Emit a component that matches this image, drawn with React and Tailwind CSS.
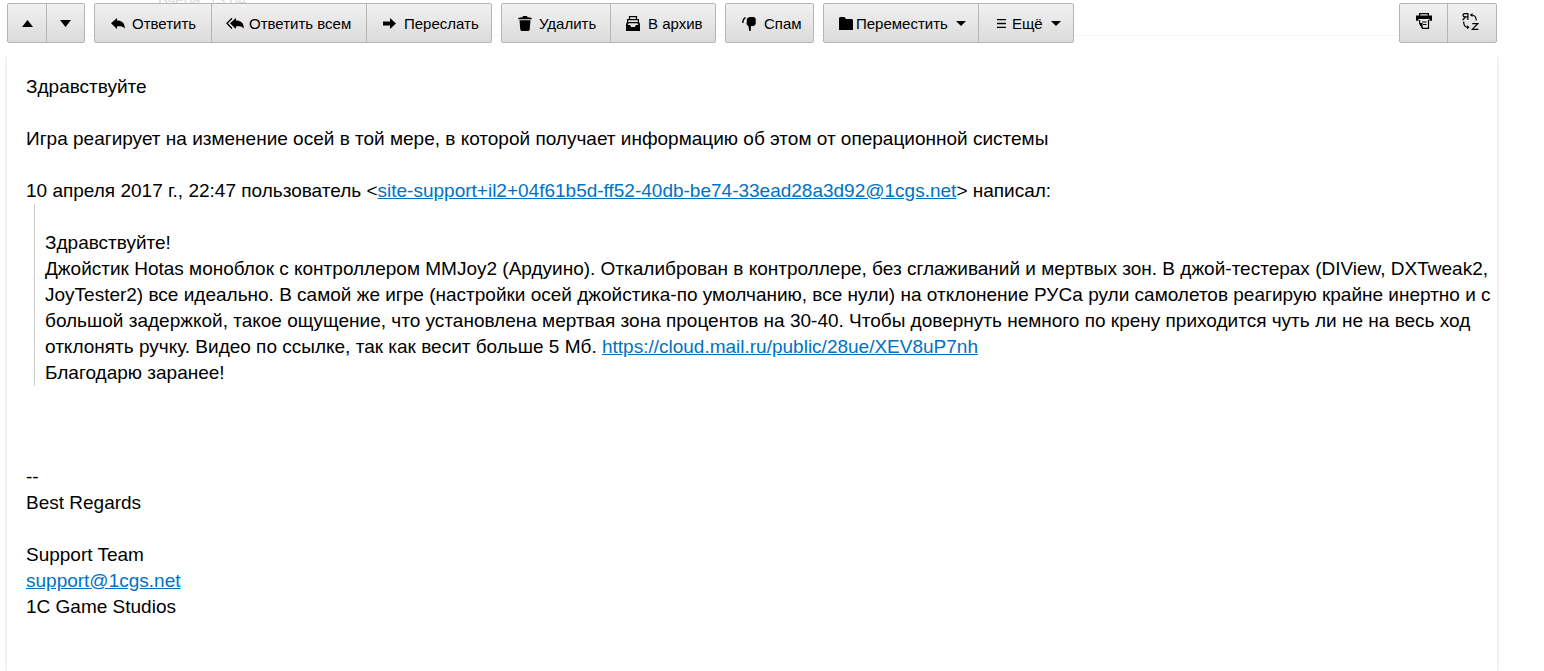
import React from 'react';

const FONT = "font-['Liberation_Sans',Arial,sans-serif]";

function Icon({ className, children, ...rest }) {
    return (
        <svg aria-hidden="true" fill="currentColor" className={`mb-0.5 shrink-0 ${className}`} {...rest}>
            {children}
        </svg>
    );
}

const replyPath = 'M6 0v2.500C10.500 2.500 13.600 4.500 14 10.500C12.500 8.500 10 8 6 8.200V11L0 5.300z';

function Group({ children, className = '' }) {
    return (
        <div className={`flex h-10 rounded-[2px] border border-[#b5b5b5] bg-linear-to-b from-[#f1f1f1] to-[#dbdbdb] divide-x divide-[#b5b5b5] ${className}`}>
            {children}
        </div>
    );
}

function Btn({ className = '', children, label }) {
    return (
        <button type="button" aria-label={label} className={`flex items-center whitespace-nowrap pt-0.5 ${className}`}>
            {children}
        </button>
    );
}

function Caret() {
    return (
        <Icon className="ml-2 h-[5px] w-[10px]" viewBox="0 0 10 5">
            <path d="M0 0h10L5 5z" />
        </Icon>
    );
}

function Toolbar() {
    return (
        <div className="relative flex pl-[7px] pr-[47px] pt-[3px] text-[15px] text-black">
            <div className="absolute top-[35px] left-[7px] right-[47px] h-px bg-[#f5f5f5]" />
            <div className="absolute -top-[7px] left-[158px] text-[15px] leading-[13px] text-[#dcdcdc]">Вчера, 13:04</div>
            <div className="relative flex flex-1 gap-[9px]">
                <Group>
                    <Btn label="Предыдущее письмо" className="w-[39px] justify-center">
                        <Icon className="h-[7px] w-[11px]" viewBox="0 0 11 7"><path d="M5.500 0L11 7H0z" /></Icon>
                    </Btn>
                    <Btn label="Следующее письмо" className="w-[37px] justify-center">
                        <Icon className="h-[7px] w-[11px]" viewBox="0 0 11 7"><path d="M5.500 7L0 0h11z" /></Icon>
                    </Btn>
                </Group>

                <Group>
                    <Btn className="w-[117px] pl-4">
                        <Icon className="mr-[7px] h-[11px] w-[14px]" viewBox="0 0 14 11"><path d={replyPath} /></Icon>
                        Ответить
                    </Btn>
                    <Btn className="w-[155px] pl-[14px]">
                        <Icon className="mr-[5px] h-[11px] w-[18px]" viewBox="0 0 18 11">
                            <path transform="translate(4 0)" d={replyPath} />
                            <path d="M6 .3L1 5.300L6 10.500" fill="none" stroke="currentColor" strokeWidth="1.300" />
                        </Icon>
                        Ответить всем
                    </Btn>
                    <Btn className="w-[124px] pl-4">
                        <Icon className="mr-2 h-[11px] w-[13px]" viewBox="0 0 13 11"><path d="M0 3.500h7V0l6 5.500L7 11V7.500H0z" /></Icon>
                        Переслать
                    </Btn>
                </Group>

                <Group>
                    <Btn className="w-[109px] pl-4">
                        <Icon className="mr-[7px] h-[15px] w-[14px]" viewBox="0 0 14 15">
                            <path d="M.3 3.300V2Q2 1.300 4.500 1.200L5 0h4l.5 1.200Q12 1.300 13.700 2v1.300zM1.500 4.300h11l-.8 9.200Q11.500 15 10 15H4Q2.500 15 2.300 13.500z" />
                        </Icon>
                        Удалить
                    </Btn>
                    <Btn className="w-[104px] pl-[15px]">
                        <Icon className="mr-2 h-[15px] w-[14px]" viewBox="0 0 14 15">
                            <path d="M3.500 3V.6h7V3M1.600 6.500V3.600h10.800v2.900" fill="none" stroke="currentColor" strokeWidth="1.200" />
                            <path fillRule="evenodd" d="M1 6h12l1 2v7H0V8zM2.500 7.200L1.700 9H4l1.200 2h3.600L10 9h2.300l-.8-1.800z" />
                        </Icon>
                        В архив
                    </Btn>
                </Group>

                <Group>
                    <Btn className="w-[87px] pl-4">
                        <Icon className="mr-2 mt-0.5 h-[14px] w-[14px]" viewBox="0 0 14 14">
                            <path d="M5 1.500L6.500 0.500L8 0h4l1.700 1.500V7L12 9H9l-.3 5H7.300L6.500 9.500L4.500 7z" />
                            <path d="M3.500.5Q.8 2 .8 6" fill="none" stroke="currentColor" strokeWidth="1.300" />
                        </Icon>
                        Спам
                    </Btn>
                </Group>

                <Group>
                    <Btn className="w-[155px] pl-[15px]">
                        <Icon className="mr-[3px] h-[13px] w-[14px]" viewBox="0 0 14 13"><path d="M0 1l1-1h4.500l1.500 2h6l1 1v10H0z" /></Icon>
                        Переместить
                        <Caret />
                    </Btn>
                    <Btn className="w-[94px] pl-[18px]">
                        <Icon className="mr-[6px] h-[9px] w-[9px]" viewBox="0 0 9 9"><path d="M0 0h9v1.300H0zM0 3.800h9v1.500H0zM0 7.700h9V9H0z" /></Icon>
                        Ещё
                        <Caret />
                    </Btn>
                </Group>
            </div>

            <Group className="relative">
                <Btn label="Распечатать" className="w-12 justify-center pb-1">
                    <Icon className="h-4 w-4" viewBox="0 0 16 16">
                        <path d="M3.600 3V.6h8.800V3M3.600 7v3L6.500 15.400h6V7M6 9h4.500M7 11.500h3.500" fill="none" stroke="currentColor" strokeWidth="1.200" />
                        <path d="M0 2.500h16v5.300h-2.500V6h-11v1.800H0zM3 10h3.500v5.500z" />
                    </Icon>
                </Btn>
                <Btn label="Перевести" className="w-12 pl-[14px] pb-1">
                    <Icon className="h-[17px] w-[17px]" viewBox="0 0 17 17">
                        <g fill="none" stroke="currentColor" strokeWidth="1.200">
                            <path d="M5.900 7V.6H3Q1 .6 1 2.200T3 3.900h2.900M3.500 4L.6 7" />
                            <path d="M10.300 10.600h5.500l-5.500 5.800h6.200" />
                            <path d="M9.500 2q4.700 0 4.700 5.500M1.600 8.500q0 5.800 4.700 5.800" />
                        </g>
                        <path d="M7.700 2L10.500 0v4zM7.500 14.300L5 12.300v4z" />
                    </Icon>
                </Btn>
            </Group>
        </div>
    );
}

function Mail({ href, children }) {
    return <a href={href} className="text-[#0071c5] underline">{children}</a>;
}

export default function App() {
    return (
        <div className={`flex min-h-screen flex-col overflow-x-hidden bg-white ${FONT}`}>
            <Toolbar />
            <main className="mt-[13px] mr-[47px] ml-[7px] flex-1 pr-1 pl-[19px] pt-[18px] pb-[51px] text-[19px] leading-[26px] text-black shadow-[0_0_3px_rgba(0,0,0,0.2)] [clip-path:inset(0_-4px)]">
                <p>Здравствуйте</p>
                <p className="mt-[26px]">Игра реагирует на изменение осей в той мере, в которой получает информацию об этом от операционной системы</p>
                <p className="mt-[26px]">
                    10 апреля 2017 г., 22:47 пользователь &lt;
                    <Mail href="mailto:site-support+il2+04f61b5d-ff52-40db-be74-33ead28a3d92@1cgs.net">site-support+il2+04f61b5d-ff52-40db-be74-33ead28a3d92@1cgs.net</Mail>
                    &gt; написал:
                </p>
                <blockquote className="ml-2 border-l border-[#cccccc] pt-[26px] pl-[10px]">
                    <p>Здравствуйте!</p>
                    <p>
                        Джойстик Hotas моноблок с контроллером MMJoy2 (Ардуино). Откалиброван в контроллере, без сглаживаний и мертвых зон. В джой-тестерах (DIView, DXTweak2, JoyTester2) все идеально. В самой же игре (настройки осей джойстика-по умолчанию, все нули) на отклонение РУСа рули самолетов реагирую крайне инертно и с большой задержкой, такое ощущение, что установлена мертвая зона процентов на 30-40. Чтобы довернуть немного по крену приходится чуть ли не на весь ход отклонять ручку. Видео по ссылке, так как весит больше 5 Мб.{' '}
                        <Mail href="https://cloud.mail.ru/public/28ue/XEV8uP7nh">https://cloud.mail.ru/public/28ue/XEV8uP7nh</Mail>
                    </p>
                    <p>Благодарю заранее!</p>
                </blockquote>
                <div className="mt-[78px]">
                    <p>--</p>
                    <p>Best Regards</p>
                    <p className="mt-[26px]">Support Team</p>
                    <p><Mail href="mailto:support@1cgs.net">support@1cgs.net</Mail></p>
                    <p>1C Game Studios</p>
                </div>
            </main>
        </div>
    );
}
